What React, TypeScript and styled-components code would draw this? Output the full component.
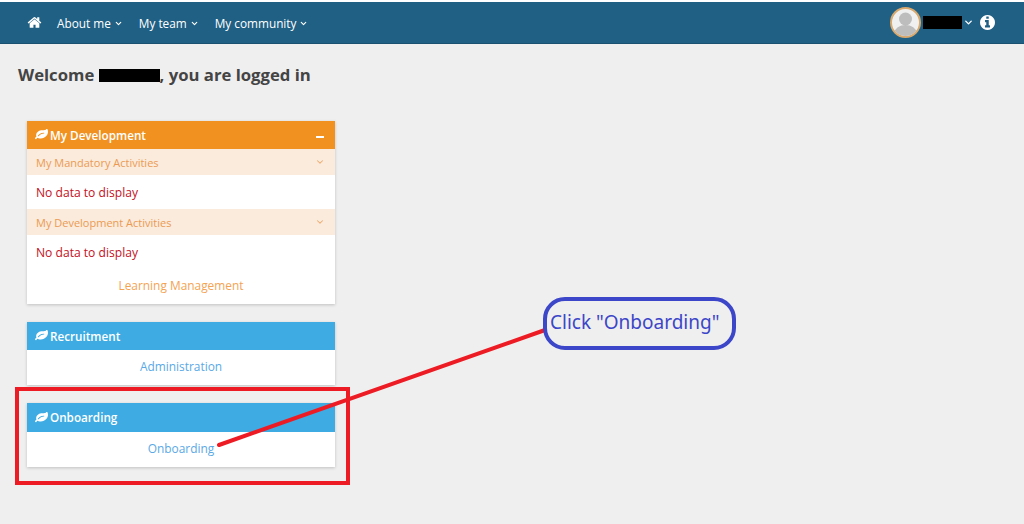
import { createGlobalStyle, styled } from "styled-components";
import { FiChevronDown } from "react-icons/fi";

const GlobalStyle = createGlobalStyle`
    html, body {
        margin: 0;
        padding: 0;
        width: 1024px;
        height: 524px;
        overflow: hidden;
        background: #efefef;
        font-family: "Open Sans", "Liberation Sans", sans-serif;
    }
`;

const orange = "#f09120";
const blue = "#3eabe2";

const Page = styled.div`
    position: relative;
    width: 1024px;
    height: 524px;
    padding-top: 2px;
    box-sizing: border-box;
    background: linear-gradient(#ffffff 2px, #efefef 2px);
`;

const NavBar = styled.div`
    display: flex;
    align-items: center;
    justify-content: space-between;
    height: 42px;
    padding: 0 29px 0 27px;
    box-sizing: border-box;
    background: #206084;
    border-bottom: 1px solid #1a5070;
    color: #ffffff;
`;

const NavLinks = styled.div`
    display: flex;
    align-items: center;
`;

const Glyph = styled.svg<{ $size: number }>`
    display: block;
    flex: none;
    width: ${(p) => p.$size}px;
    height: ${(p) => p.$size}px;
    fill: currentColor;
`;

const HomeLink = styled.span`
    display: flex;
    margin-right: 15px;
`;

const NavLink = styled.span`
    display: flex;
    align-items: center;
    gap: 3px;
    margin-right: 16px;
    padding-top: 1px;
    font-size: 11.8px;
    white-space: nowrap;
    svg {
        stroke-width: 3;
    }
`;

const UserArea = styled.div`
    display: flex;
    align-items: center;
`;

const Avatar = styled.div`
    display: flex;
    width: 31px;
    height: 31px;
    margin-right: 2px;
    box-sizing: border-box;
    overflow: hidden;
    border-radius: 50%;
    border: 2px solid #d8a86c;
    background: #f0f0f0;
`;

const Redacted = styled.span<{ $width: number; $height: number }>`
    display: inline-block;
    width: ${(p) => p.$width}px;
    height: ${(p) => p.$height}px;
    background: #000000;
`;

const UserChevron = styled.span`
    display: flex;
    margin: 0 6px 0 1px;
    font-size: 11px;
    svg {
        stroke-width: 3;
    }
`;

const Content = styled.div`
    padding: 21px 0 0 18px;
`;

const Welcome = styled.h1`
    display: flex;
    align-items: center;
    margin: 0 0 36px;
    height: 20px;
    font-size: 16.7px;
    line-height: 20px;
    font-weight: 700;
    color: #444444;
    white-space: pre;
`;

const Cards = styled.div`
    display: flex;
    flex-direction: column;
    gap: 18px;
    width: 308px;
    margin-left: 9px;
`;

const Card = styled.section`
    background: #ffffff;
    box-shadow: 0 1px 3px rgba(0, 0, 0, 0.2);
`;

const CardHeader = styled.div<{ $color: string; $tall?: boolean }>`
    display: flex;
    align-items: center;
    justify-content: space-between;
    height: ${(p) => (p.$tall ? 29 : 28)}px;
    padding: 0 11px 1px 8px;
    box-sizing: border-box;
    background: ${(p) => p.$color};
    color: #ffffff;
    font-size: 11.7px;
    font-weight: 600;
`;

const CardTitle = styled.span`
    display: flex;
    align-items: center;
    gap: 2px;
`;

const Collapse = styled.span`
    width: 8px;
    height: 2px;
    margin-top: 4px;
    background: #ffffff;
`;

const SectionHeader = styled.div`
    display: flex;
    align-items: center;
    justify-content: space-between;
    height: 26px;
    padding: 0 10px 0 9px;
    box-sizing: border-box;
    background: #faebdc;
    color: #ec9a52;
    font-size: 11px;
`;

const SectionChevron = styled.span`
    display: flex;
    font-size: 10px;
    svg {
        stroke-width: 2.5;
        opacity: 0.8;
    }
`;

const EmptyRow = styled.div`
    display: flex;
    align-items: center;
    height: 34px;
    padding-left: 9px;
    color: #c40f1c;
    font-size: 12.1px;
    font-weight: 500;
`;

const CardLink = styled.div<{ $color: string }>`
    display: flex;
    align-items: center;
    justify-content: center;
    height: 35px;
    padding-bottom: 3px;
    box-sizing: border-box;
    color: ${(p) => p.$color};
    font-size: 11.9px;
`;

const Callout = styled.div`
    position: absolute;
    left: 543px;
    top: 297px;
    display: flex;
    align-items: center;
    width: 193px;
    height: 53px;
    padding: 0 0 3px 3px;
    box-sizing: border-box;
    border: 4px solid #3c46c8;
    border-radius: 22px;
    color: #3c46c8;
    font-family: "Noto Sans", sans-serif;
    font-size: 19px;
    white-space: nowrap;
`;

const HighlightBox = styled.div`
    position: absolute;
    left: 15px;
    top: 387px;
    width: 335px;
    height: 98px;
    box-sizing: border-box;
    border: 4px solid #ed1c24;
`;

const Arrow = styled.svg`
    position: absolute;
    left: 0;
    top: 0;
`;

const HomeIcon = () => (
    <Glyph $size={15} viewBox="0 0 1792 1792">
        <path d="M1472 992v480q0 26-19 45t-45 19h-384v-384h-256v384h-384q-26 0-45-19t-19-45v-480q0-1 .5-3t.5-3l575-474 575 474q1 2 1 6zm223-69l-62 74q-8 9-21 11h-3q-13 0-21-7l-692-577-692 577q-12 8-24 7-13-2-21-11l-62-74q-8-10-7-23.5t11-21.5l719-599q32-26 76-26t76 26l244 204v-195q0-14 9-23t23-9h192q14 0 23 9t9 23v408l219 182q10 8 11 21.5t-7 23.5z" />
    </Glyph>
);

const InfoIcon = () => (
    <Glyph $size={15} viewBox="128 128 1536 1536">
        <path d="M1152 1376v-160q0-14-9-23t-23-9h-96v-512q0-14-9-23t-23-9h-320q-14 0-23 9t-9 23v160q0 14 9 23t23 9h96v320h-96q-14 0-23 9t-9 23v160q0 14 9 23t23 9h448q14 0 23-9t9-23zm-128-896v-160q0-14-9-23t-23-9h-192q-14 0-23 9t-9 23v160q0 14 9 23t23 9h192q14 0 23-9t9-23zm640 416q0 209-103 385.5t-279.5 279.5-385.5 103-385.5-103-279.5-279.5-103-385.5 103-385.5 279.5-279.5 385.5-103 385.5 103 279.5 279.5 103 385.5z" />
    </Glyph>
);

const LeafIcon = () => (
    <Glyph $size={13} viewBox="0 0 1792 1792">
        <path d="M1280 704q0-26-19-45t-45-19q-172 0-318 49.5t-259.5 134-235.5 219.5q-19 21-19 45t19 45 45 19q24 0 45-19 27-24 74-71t67-66q137-124 268.5-176t313.5-52q26 0 45-19t19-45zm512-198q0 95-20 193-46 224-184.5 383t-357.5 268q-214 108-438 108-148 0-286-47-15-5-88-42t-96-37q-16 0-39.5 32t-45 70-52.5 70-60 32q-43 0-63.5-17.5t-45.5-59.5q-2-4-6-11t-5.5-10-3-9.5-1.5-13.5q0-35 31-73.5t68-65.5 68-56 31-48q0-4-14-38t-16-44q-9-51-9-104 0-115 43.5-220t119-184.5 170.5-139 204-95.5q55-18 145-25.5t179.5-9 178.5-6 163.5-24 113.5-56.5l29.5-29.5 29.5-28 27-20 36.5-16 43.5-4.5q39 0 70.5 46t47.5 112 24 124 8 96z" />
    </Glyph>
);

const Silhouette = () => (
    <svg width="27" height="27" viewBox="0 0 27 27" fill="#bdbdbd">
        <circle cx="13.5" cy="10" r="6.5" />
        <ellipse cx="13.5" cy="24" rx="11" ry="8" />
    </svg>
);

const App = () => (
    <Page>
        <GlobalStyle />
        <NavBar>
            <NavLinks>
                <HomeLink><HomeIcon /></HomeLink>
                <NavLink>About me <FiChevronDown size={9} /></NavLink>
                <NavLink>My team <FiChevronDown size={9} /></NavLink>
                <NavLink>My community <FiChevronDown size={9} /></NavLink>
            </NavLinks>
            <UserArea>
                <Avatar><Silhouette /></Avatar>
                <Redacted $width={39} $height={13} />
                <UserChevron><FiChevronDown /></UserChevron>
                <InfoIcon />
            </UserArea>
        </NavBar>
        <Content>
            <Welcome>Welcome <Redacted $width={61} $height={13} />, you are logged in</Welcome>
            <Cards>
                <Card>
                    <CardHeader $color={orange}>
                        <CardTitle><LeafIcon /> My Development</CardTitle>
                        <Collapse />
                    </CardHeader>
                    <SectionHeader>
                        My Mandatory Activities
                        <SectionChevron><FiChevronDown /></SectionChevron>
                    </SectionHeader>
                    <EmptyRow>No data to display</EmptyRow>
                    <SectionHeader>
                        My Development Activities
                        <SectionChevron><FiChevronDown /></SectionChevron>
                    </SectionHeader>
                    <EmptyRow>No data to display</EmptyRow>
                    <CardLink $color="#f4a352">Learning Management</CardLink>
                </Card>
                <Card>
                    <CardHeader $color={blue}>
                        <CardTitle><LeafIcon /> Recruitment</CardTitle>
                    </CardHeader>
                    <CardLink $color="#5aa9e6">Administration</CardLink>
                </Card>
                <Card>
                    <CardHeader $color={blue} $tall>
                        <CardTitle><LeafIcon /> Onboarding</CardTitle>
                    </CardHeader>
                    <CardLink $color="#5aa9e6">Onboarding</CardLink>
                </Card>
            </Cards>
        </Content>
        <HighlightBox />
        <Arrow width="1024" height="524">
            <line x1="219" y1="445" x2="545" y2="330" stroke="#ed1c24" strokeWidth="4" strokeLinecap="round" />
        </Arrow>
        <Callout>Click "Onboarding"</Callout>
    </Page>
);

export default App;
